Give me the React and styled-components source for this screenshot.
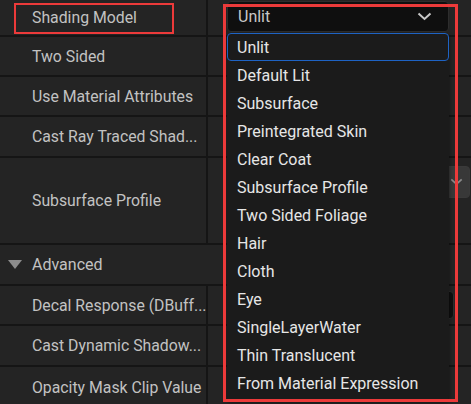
import React from 'react';
import styled, { createGlobalStyle } from 'styled-components';

const GlobalStyle = createGlobalStyle`
  html, body {
    margin: 0;
    padding: 0;
    background: #151515;
    overflow: hidden;
  }
  * {
    box-sizing: border-box;
  }
`;

const Panel = styled.div`
  position: relative;
  width: 471px;
  height: 404px;
  overflow: hidden;
  display: flex;
  flex-direction: column;
  gap: 2px;
  background: #151515;
  font-family: Roboto, 'Noto Sans', sans-serif;
`;

const PropertyRow = styled.div`
  display: grid;
  grid-template-columns: 206px 1fr;
  column-gap: 2px;
  flex: 0 0 ${(p) => p.$height}px;
`;

const LabelCell = styled.div`
  display: flex;
  align-items: center;
  padding-left: 32px;
  background: #242424;
  color: #c2c2c2;
  font-size: 15.8px;
  white-space: nowrap;
`;

const ValueCell = styled.div`
  display: flex;
  align-items: ${(p) => (p.$top ? 'flex-start' : 'center')};
  padding: ${(p) => (p.$top ? `${p.$pad}px 0 0 19px` : '0 0 0 19px')};
  background: #242424;
`;

const Combo = styled.div`
  display: flex;
  align-items: center;
  justify-content: space-between;
  width: ${(p) => p.$width || 222}px;
  height: ${(p) => p.$height || 31}px;
  padding: 0 16px 0 10px;
  background: ${(p) => p.$bg || '#0f0f0f'};
  border: 1px solid #2d2d2d;
  border-radius: 4px;
  color: #c8c8c8;
  font-size: 16px;
`;

const AssetCombo = styled(Combo)`
  width: auto;
  flex: 1;
  margin-right: 1px;
  padding-right: 6px;
  border-color: #3a3a3a;
  justify-content: flex-end;
`;

const CategoryRow = styled.div`
  display: flex;
  align-items: center;
  gap: 10px;
  flex: 0 0 ${(p) => p.$height}px;
  padding-left: 8px;
  background: #242424;
  color: #c2c2c2;
  font-size: 16px;
`;

const Outline = styled.div`
  position: absolute;
  border: ${(p) => p.$w}px solid #ec3a3a;
  pointer-events: none;
`;

const Menu = styled.div`
  position: absolute;
  left: 227px;
  top: 33px;
  width: 222px;
  height: 367px;
  background: #1b1b1b;
  border-radius: 4px;
  box-shadow: 0 2px 4px rgba(0, 0, 0, 0.5);
  display: flex;
  flex-direction: column;
`;

const MenuItem = styled.div`
  display: flex;
  align-items: center;
  height: 28px;
  padding-left: 9px;
  color: #e6e6e6;
  font-size: 16px;
  white-space: nowrap;
  border: 1px solid ${(p) => (p.$selected ? '#1e63c4' : 'transparent')};
  border-radius: 4px;
`;

const Chevron = ({ color = '#c8c8c8', size = 15 }) => (
  <svg width={size} height={size * 0.6} viewBox="0 0 15 9" fill="none">
    <path d="M1.5 1.5 L7.5 7 L13.5 1.5" stroke={color} strokeWidth="2" />
  </svg>
);

const Triangle = () => (
  <svg width="14" height="9" viewBox="0 0 14 9">
    <path d="M0 0 H14 L7 9 Z" fill="#8c8c8c" />
  </svg>
);

const options = [
  'Unlit',
  'Default Lit',
  'Subsurface',
  'Preintegrated Skin',
  'Clear Coat',
  'Subsurface Profile',
  'Two Sided Foliage',
  'Hair',
  'Cloth',
  'Eye',
  'SingleLayerWater',
  'Thin Translucent',
  'From Material Expression',
];

const App = () => (
  <>
    <GlobalStyle />
    <Panel>
      <PropertyRow $height={35}>
        <LabelCell>Shading Model</LabelCell>
        <ValueCell $top $pad={1}>
          <Combo>
            Unlit
            <Chevron />
          </Combo>
        </ValueCell>
      </PropertyRow>
      <PropertyRow $height={38}>
        <LabelCell>Two Sided</LabelCell>
        <ValueCell />
      </PropertyRow>
      <PropertyRow $height={38}>
        <LabelCell>Use Material Attributes</LabelCell>
        <ValueCell />
      </PropertyRow>
      <PropertyRow $height={39}>
        <LabelCell>Cast Ray Traced Shad...</LabelCell>
        <ValueCell />
      </PropertyRow>
      <PropertyRow $height={85}>
        <LabelCell>Subsurface Profile</LabelCell>
        <ValueCell $top $pad={8}>
          <AssetCombo $bg="#383838" $height={32}>
            <Chevron color="#8a8a8a" size={13} />
          </AssetCombo>
        </ValueCell>
      </PropertyRow>
      <CategoryRow $height={39}>
        <Triangle />
        Advanced
      </CategoryRow>
      <PropertyRow $height={38}>
        <LabelCell>Decal Response (DBuff...</LabelCell>
        <ValueCell>
          <Combo $width={227} $height={28} />
        </ValueCell>
      </PropertyRow>
      <PropertyRow $height={39}>
        <LabelCell>Cast Dynamic Shadow...</LabelCell>
        <ValueCell />
      </PropertyRow>
      <PropertyRow $height={40}>
        <LabelCell>Opacity Mask Clip Value</LabelCell>
        <ValueCell />
      </PropertyRow>

      <Menu>
        {options.map((o, i) => (
          <MenuItem key={o} $selected={i === 0}>
            {o}
          </MenuItem>
        ))}
      </Menu>

      <Outline $w={2} style={{ left: 14, top: 3, width: 160, height: 31 }} />
      <Outline $w={3} style={{ left: 223, top: 4, width: 235, height: 398 }} />
    </Panel>
  </>
);

export default App;
